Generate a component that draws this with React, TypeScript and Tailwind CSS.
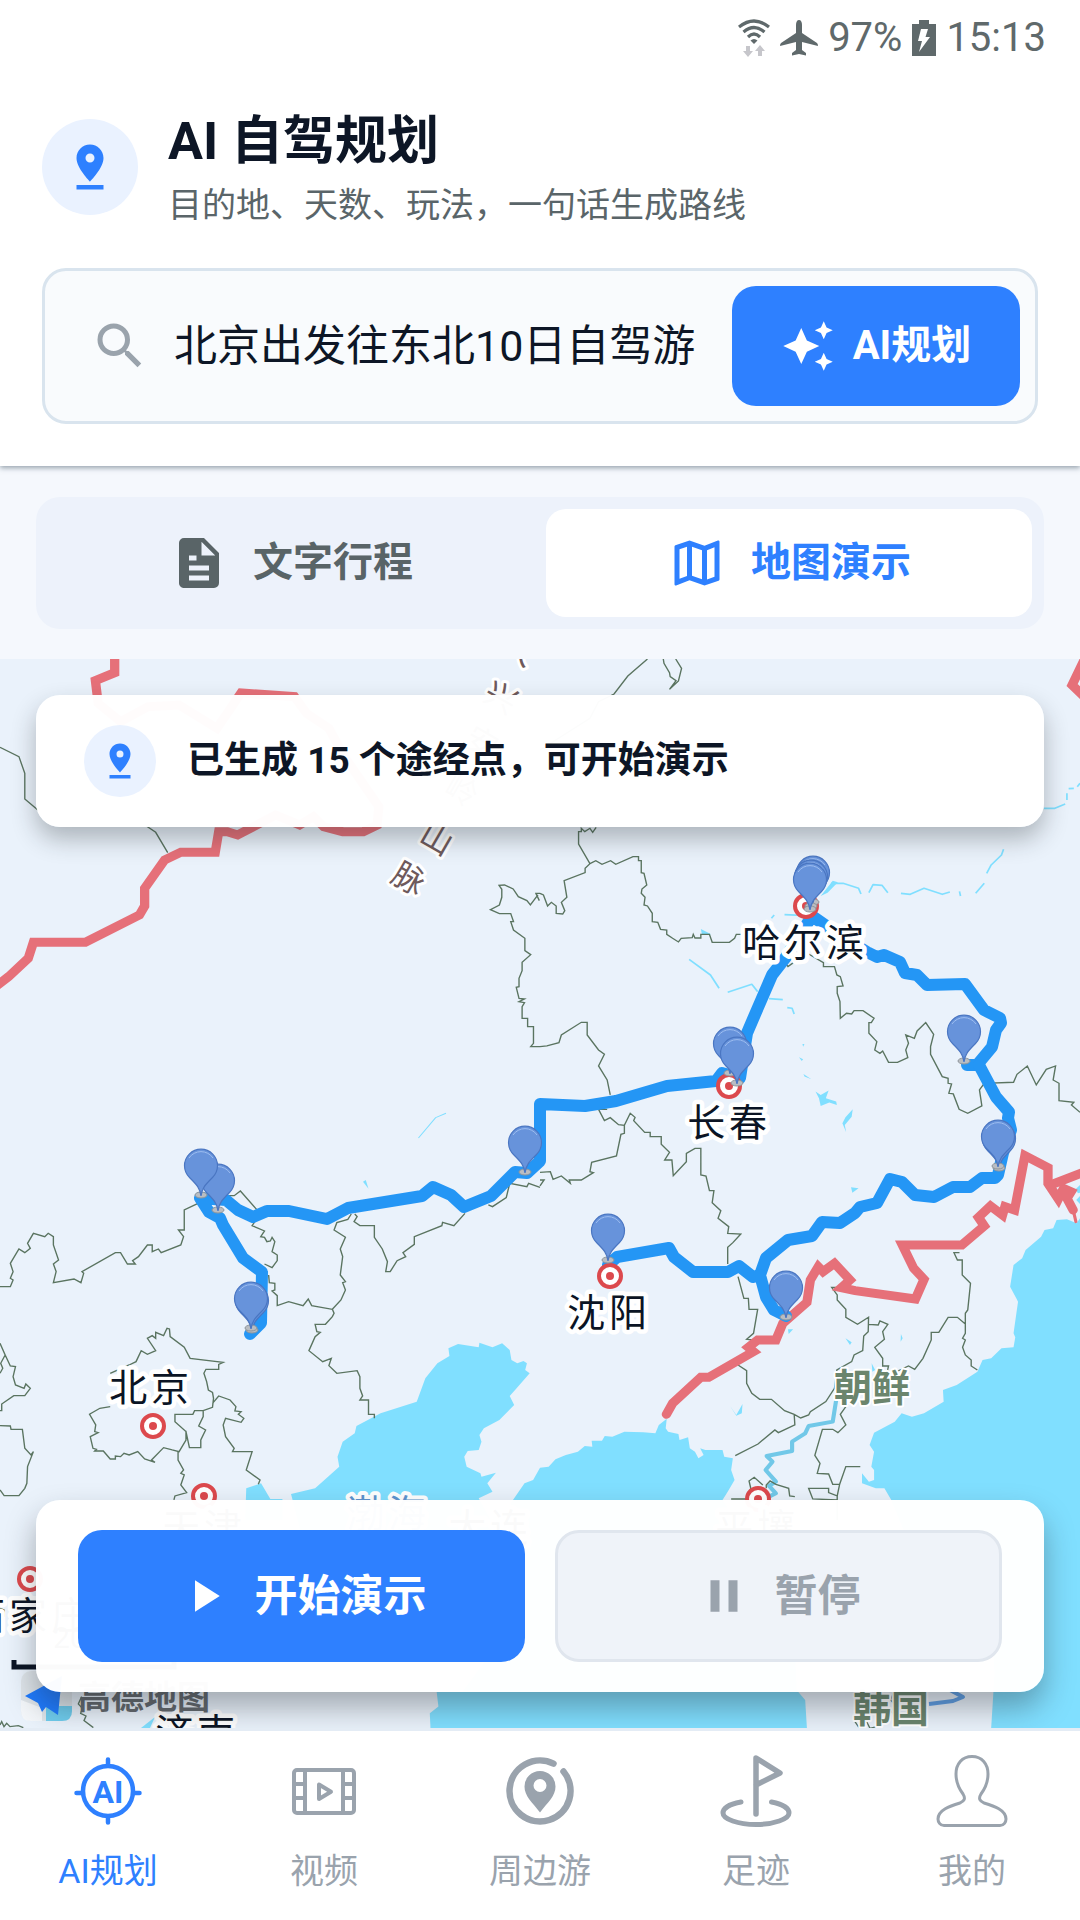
import type { ReactNode } from "react";
import { MdAutoAwesome, MdOutlineMap, MdPause, MdPlayArrow, MdSearch } from "react-icons/md";

const route = [
  "M250 1334L261 1323L262 1272L243 1258L223 1225L220 1218L209 1212L200 1198L226 1200L238 1210L253 1217L267 1211H289L327 1219L348 1208L422 1196L433 1187L451 1195L464 1207L491 1196L515 1172L527 1173L540 1161V1104L585 1106L616 1101L667 1086L716 1081L722 1073L740 1078L747 1033L772 975L786 957L812 916L835 932L867 952L877 957L884 955L900 962L905 973L917 975L927 985L965 984L984 1010L1000 1018L1001 1023L996 1030L992 1047L977 1065H967",
  "M979 1065L996 1097L1009 1112L1008 1118L1011 1130L1003 1153L998 1175L995 1178H982L970 1187H953L934 1197L915 1195L902 1182L890 1179L877 1203L860 1207L855 1213L840 1223L822 1222L812 1236L788 1240L766 1258L760 1275L766 1297L774 1310L786 1316",
  "M760 1275L753 1277L739 1266L728 1272H693L674 1257L669 1248L617 1257L608 1265",
];

const pins = [
  [218, 1181],
  [201, 1166],
  [252, 1301],
  [251, 1299],
  [525, 1143],
  [608, 1231],
  [786, 1288],
  [999, 1139],
  [998, 1137],
  [964, 1032],
  [730, 1044],
  [737, 1054],
  [813, 873],
  [811, 877],
  [810, 880],
];

const cityDots = [
  [806, 906],
  [729, 1086],
  [610, 1276],
  [153, 1426],
  [204, 1496],
  [758, 1499],
  [30, 1579],
];

const cityLabels = [
  { name: "哈尔滨", x: 805, y: 956 },
  { name: "长春", x: 729, y: 1136 },
  { name: "沈阳", x: 609, y: 1326 },
  { name: "北京", x: 151, y: 1401 },
  { name: "天津", x: 204, y: 1541 },
  { name: "平壤", x: 757, y: 1541 },
  { name: "石家庄", x: 30, y: 1629 },
  { name: "大连", x: 490, y: 1541 },
  { name: "济南", x: 197, y: 1746 },
];

const mountains = [
  { char: "大", x: 519, y: 649 },
  { char: "兴", x: 501, y: 697 },
  { char: "安", x: 482, y: 742 },
  { char: "岭", x: 462, y: 790 },
  { char: "山", x: 437, y: 838 },
  { char: "脉", x: 409, y: 878 },
];

const navItems = [
  { label: "AI规划", icon: <AiIcon />, active: true },
  { label: "视频", icon: <FilmIcon />, active: false },
  { label: "周边游", icon: <NearbyIcon />, active: false },
  { label: "足迹", icon: <FlagIcon />, active: false },
  { label: "我的", icon: <PersonIcon />, active: false },
];

function NavSvg({ children }: { children: ReactNode }) {
  return (
    <svg
      viewBox="0 0 72 72"
      className="size-[72px]"
      fill="none"
      stroke="currentColor"
      strokeLinecap="round"
      strokeLinejoin="round"
      aria-hidden="true"
    >
      {children}
    </svg>
  );
}

function AiIcon() {
  return (
    <NavSvg>
      <circle cx="36" cy="36" r="25" strokeWidth="4.5" />
      <path d="M36 4.500V10M36 62V67.500M4.500 38H10M62 38H67.500" strokeWidth="4.500" />
      <text
        x="36"
        y="48"
        textAnchor="middle"
        fill="currentColor"
        stroke="none"
        className="font-['Roboto',sans-serif] text-[32px] font-bold"
      >
        AI
      </text>
    </NavSvg>
  );
}

function FilmIcon() {
  return (
    <NavSvg>
      <rect x="6" y="15" width="60" height="43" rx="3" strokeWidth="4" />
      <path d="M17 15V58M55 15V58M6 29H17M6 43H17M55 29H66M55 43H66" strokeWidth="4" />
      <path d="M31 29.500V44L43 36.700Z" strokeWidth="4" />
    </NavSvg>
  );
}

function NearbyIcon() {
  return (
    <NavSvg>
      <path d="M49.500 8.600A30.500 30.500 0 1 0 59.500 16.500" strokeWidth="6.500" />
      <path
        d="M36 16A15.500 15.500 0 0 0 20.500 31.500C20.500 41 28 47 36 57.500C44 47 51.500 41 51.500 31.500A15.500 15.500 0 0 0 36 16ZM36 24A6.500 6.500 0 1 1 36 37A6.500 6.500 0 1 1 36 24Z"
        fill="currentColor"
        stroke="none"
        fillRule="evenodd"
      />
    </NavSvg>
  );
}

function FlagIcon() {
  return (
    <NavSvg>
      <path d="M36 59V3L60 18L36 30" strokeWidth="5.500" />
      <path d="M21 47C10 49 3 53 3 58C3 64 18 69.500 36 69.500S69 64 69 58C69 53 62 49 51.500 47" strokeWidth="5" />
    </NavSvg>
  );
}

function PersonIcon() {
  return (
    <NavSvg>
      <path
        d="M36 1.500C26 1.500 20 9 20 19C20 29 24 35 27 39C30 44 28 46 24 48C14 51 2 55 2 64C2 67 4 70.500 8 70.500H64C68 70.500 70 67 70 64C70 55 58 51 48 48C44 46 42 44 45 39C48 35 52 29 52 19C52 9 46 1.500 36 1.500Z"
        strokeWidth="3"
      />
    </NavSvg>
  );
}

function PinDropIcon({ className }: { className: string }) {
  return (
    <svg viewBox="0 0 24 24" className={className} fill="currentColor" aria-hidden="true">
      <path d="M18 8c0-3.310-2.690-6-6-6S6 4.690 6 8c0 4.500 6 10.500 6 10.500s6-6 6-10.500zm-8 0a2 2 0 1 1 4 0 2 2 0 0 1-4 0zM6 20v2h12v-2H6z" />
    </svg>
  );
}

function DocumentIcon() {
  return (
    <svg viewBox="0 0 24 24" className="size-[60px]" fill="currentColor" aria-hidden="true">
      <path
        fillRule="evenodd"
        d="M6 2a2 2 0 0 0-2 2v16c0 1.100.900 2 2 2h12a2 2 0 0 0 2-2V8l-6-6H6zm7 1.500L18.500 9H13V3.500zM8 9h3v2H8V9zm0 4h8v2H8v-2zm0 4h8v2H8v-2z"
      />
    </svg>
  );
}

function StatusBar() {
  return (
    <div className="-mr-2 flex h-16 items-center justify-end gap-[10px] pt-3 font-['Roboto',sans-serif] text-[40px] leading-none text-[#5f696b]">
      <svg viewBox="0 0 32 38" className="h-[38px] w-8" fill="none" aria-hidden="true">
        <g stroke="currentColor" strokeWidth="3.200">
          <path d="M1 8Q16 -4 31 8" />
          <path d="M5.500 13Q16 4 26.500 13" />
          <path d="M10 18Q16 12 22 18" />
        </g>
        <path d="M12.500 21.500Q16 18.500 19.500 21.500L16 25Z" fill="currentColor" />
        <path d="M8 27h4v5h3l-5 6-5-6h3zM20 37h4v-5h3l-5-6-5 6h3z" fill="#c6c6cb" />
      </svg>
      <svg viewBox="0 0 38 36" className="h-9 w-[38px]" fill="currentColor" aria-hidden="true">
        <path d="M19 0C21 0 22 2 22 5V13L37 23Q38 24 38 26L22 22V30L26 33V35.500L19 34L12 35.500V33L16 30V22L0 26Q0 24 1 23L16 13V5C16 2 17 0 19 0Z" />
      </svg>
      <span>97%</span>
      <svg viewBox="0 0 24 36" className="h-9 w-6" aria-hidden="true">
        <path d="M7 0H17V4H24V36H0V4H7Z" fill="currentColor" />
        <path d="M9 9H16L13.500 17H18L7 32L10 21H6Z" fill="#fff" />
      </svg>
      <span>15:13</span>
    </div>
  );
}

function Header() {
  return (
    <header className="relative z-10 bg-white px-[42px] pb-[42px] shadow-[0_2px_5px_rgba(60,80,95,0.5)]">
      <StatusBar />
      <div className="mt-11 flex items-start gap-[30px]">
        <div className="mt-[11px] grid size-24 shrink-0 place-items-center rounded-full bg-[#eaf2ff] text-[#2e80ff]">
          <PinDropIcon className="size-[54px]" />
        </div>
        <div>
          <h1 className="text-[52px] leading-[68px] font-bold text-[#0d1626]">AI 自驾规划</h1>
          <p className="mt-[2px] text-[34px] leading-[54px] text-[#5a6569]">
            目的地、天数、玩法，一句话生成路线
          </p>
        </div>
      </div>
      <form className="mt-9 flex items-center rounded-3xl border-3 border-[#d9e4ee] bg-[#f9fbfd] p-[15px] pl-[45px]">
        <label htmlFor="trip" className="shrink-0 text-[#9aa3ac]">
          <MdSearch className="size-[60px]" aria-hidden="true" />
          <span className="sr-only">行程需求</span>
        </label>
        <input
          id="trip"
          type="text"
          defaultValue="北京出发往东北10日自驾游"
          className="ml-6 h-[72px] min-w-0 flex-1 bg-transparent pb-2 text-[43px] text-[#0d1626] outline-none"
        />
        <button
          type="button"
          className="flex h-[120px] w-72 shrink-0 items-center justify-center gap-[18px] rounded-3xl bg-[#2e80ff] text-[40px] font-bold text-white"
        >
          <MdAutoAwesome className="size-[54px]" aria-hidden="true" />
          AI规划
        </button>
      </form>
    </header>
  );
}

function ViewTabs() {
  return (
    <div className="bg-[#f5f8fd] px-9 pt-[31px] pb-[30px]">
      <div role="tablist" className="flex gap-3 rounded-3xl bg-[#edf2fb] p-3">
        <button
          type="button"
          role="tab"
          aria-selected="false"
          className="flex h-[108px] flex-1 items-center justify-center gap-6 rounded-[20px] text-[40px] font-bold text-[#596467]"
        >
          <DocumentIcon />
          文字行程
        </button>
        <button
          type="button"
          role="tab"
          aria-selected="true"
          className="flex h-[108px] flex-1 items-center justify-center gap-6 rounded-[20px] bg-white text-[40px] font-bold text-[#2e80ff]"
        >
          <MdOutlineMap className="size-[60px]" aria-hidden="true" />
          地图演示
        </button>
      </div>
    </div>
  );
}

function Seas() {
  return (
    <g fill="#80dfff">
      <g transform="translate(0 1100) scale(.3444 .3333)">
        <path d="M845 1182L915 1165 985 1100 980 1070 995 1025 1030 1000 1035 978 1105 940 1210 905 1235 835 1270 790 1305 768 1302 745 1330 732 1390 742 1392 728 1430 742 1458 730 1480 750 1485 780 1502 790 1520 783 1530 790 1525 810 1538 820 1500 865 1480 888 1493 915 1450 960 1405 985 1392 1005 1398 1025 1390 1050 1358 1053 1348 1070 1355 1100 1395 1120 1398 1130 1440 1118 1415 1150 1430 1175 1390 1195 1440 1290 1300 1500 900 1400Z" />
        <path d="M712 1260L715 1165 758 1150 785 1197 820 1197V1260Z" />
        <path d="M1054 245L1062 240 1070 266Z" />
      </g>
      <g transform="translate(540 1100) scale(.3444 .3333)">
        <path d="M-85 1210L-45 1150 -20 1140 0 1103 25 1100 45 1078 75 1065 110 1055 130 1038 152 1040 150 1022 180 1022 188 1008 210 1010 245 995 300 997 335 1000 345 975 368 956 365 985 372 995 402 1002 405 1020 430 1012 435 1045 450 1055 460 1075 475 1065 465 1045 480 1050 530 1050 535 1070 560 1075 555 1110 565 1140 545 1175 530 1200 640 1380 580 1500 740 1650 745 1770 770 1800 775 1884 -318 1884 -320 1840 -295 1820 -300 1776 -225 1776 -100 1600 -100 1280Z" />
        <path d="M1568 355L1558 370 1530 358 1500 360 1490 385 1465 390 1455 410 1410 450 1400 475 1375 495 1365 560 1388 605 1375 700 1380 712 1375 742 1340 745 1310 775 1285 780 1270 815 1210 855 1170 870 1172 905 1115 940 1080 950 1050 940 1030 965 970 998 957 1035 970 1055 962 1100 970 1110 970 1140 955 1145 935 1120 935 1150 975 1165 1000 1165 1020 1200 1100 1400 1315 1600 1320 1720 1310 1884H1568Z" />
        <path d="M1568 255L1555 268 1562 280 1568 278ZM1568 288L1557 300 1568 312ZM887 715L905 727 900 735ZM963 790L973 810 965 815ZM1048 702L1053 715 1047 725ZM720 688H735L722 702ZM903 262L925 265 907 278ZM552 918L570 945 588 912 586 940 570 947ZM1088 1187V1200H1093ZM887 52L908 28 905 50 885 75 889 97 878 70Z" />
      </g>
      <g transform="translate(540 650) scale(.3444 .3333)">
        <path d="M815 738L850 692 865 697 835 728ZM800 1325L815 1335 838 1322 830 1345 860 1355 862 1365 840 1358 815 1368 810 1345ZM467 837L497 853 470 853ZM752 1222L764 1228 760 1233ZM762 1182H768L764 1190ZM765 1272L788 1288 768 1280Z" />
      </g>
      <path d="M141 1728L155 1717 150 1728Z" />
    </g>
  );
}

function Rivers() {
  return (
    <g fill="none" stroke="#80dfff" strokeWidth="5" strokeLinejoin="round">
      <g transform="translate(540 650) scale(.3444 .3333)">
        <path d="M845 700H880L925 715 932 732M955 728L967 704 993 706 1010 728M1048 730L1075 733 1115 715 1168 733 1190 726M1218 724L1221 738M1265 730L1290 700M1297 670L1310 645 1340 615 1346 598M1463 475H1495L1525 462M1530 450V430M1535 416L1550 415M1560 410L1568 400M433 928L495 975 520 1015M545 1027L615 1003 632 1025M665 1046L705 1049M718 1073L732 1075 738 1092M672 805L680 795M710 794L760 796" />
      </g>
      <g transform="translate(0 650) scale(.3444 .3333)">
        <path d="M1215 1464L1265 1403 1295 1390" strokeWidth="3" />
      </g>
      <g transform="translate(540 1100) scale(.3444 .3333)" stroke="#71c8e8" strokeWidth="12">
        <path d="M860 900L850 965 780 978 770 1000 732 1025V1053L658 1068 675 1085 655 1110 685 1145 665 1158 685 1180 665 1190" />
      </g>
      <path d="M929 1704L953 1701 963 1697 950 1690" stroke="#5f9fe6" strokeWidth="4" />
    </g>
  );
}

function Provinces() {
  return (
    <g fill="none" stroke="#5a7460" strokeWidth="4">
      <g transform="translate(0 650) scale(.3444 .3333)">
        <path d="M0 292L55 320 72 370V447L110 480M425 528L452 547 487 608M1568 730H1556L1566 752M1562 735L1540 765 1530 752 1505 740 1490 717 1465 705 1449 706 1457 718V742L1450 765 1424 779 1450 791H1483L1491 815H1483L1491 840 1524 865V902L1541 914 1516 937V962L1507 985V1010L1499 1012 1507 1045 1523 1047 1507 1055 1523 1058 1516 1070V1105H1532V1130H1549V1180L1541 1190H1568" />
      </g>
      <g transform="translate(540 650) scale(.3444 .3333)">
        <path d="M312 27L255 78 215 132 170 155 145 205 0 300M358 27L360 40 376 68 378 80 395 92 376 118 402 93 411 55 394 27M163 532L153 547 145 535 130 545 120 535V545H112V582L145 641 131 655V668L70 692 78 742 62 757 72 782 66 792 47 790V768L33 757 22 768 10 735 0 730M145 641L162 632 180 643 205 632 220 643 270 620H286V632H294V668L302 670 310 705 296 717 294 730 305 742 302 765 312 768 326 790V815L342 817 350 838 368 840V853L385 865 402 876 410 865 442 863 445 853 450 864H467V853H492L500 877H550L565 865 570 853H600" />
        <path d="M780 912L823 938V950H855L862 975 872 980 880 1008 863 1010V1030L871 1055 872 1105 890 1090 905 1092 912 1082H938L970 1105 962 1118H955V1150L978 1175 972 1200 987 1210 995 1203 1012 1237H1038L1068 1223 1062 1200 1070 1180 1062 1155 1087 1165 1095 1143 1120 1118 1143 1153 1134 1190V1213L1168 1280 1185 1285V1300L1195 1302 1187 1330 1200 1332 1217 1378 1242 1390 1283 1368 1276 1320 1290 1300 1375 1297 1385 1273 1415 1248 1441 1305 1470 1258 1497 1248 1490 1290 1507 1300V1352L1550 1357 1543 1365 1568 1387M0 1190L20 1188 55 1178 62 1155 120 1117H137V1155L170 1200 187 1213 170 1248 195 1290 204 1335M665 935L690 940 705 930 720 950 740 935" />
      </g>
      <g transform="translate(540 1100) scale(.3444 .3333)">
        <path d="M195 28H170L187 62 204 53 228 74 245 76V100L235 103 222 168 150 187 145 215 155 218 120 240H85L88 250 62 228 38 238 30 215 0 217M0 240H12L0 258M245 76L262 40 276 52 272 62 304 97H320V110H352V133L376 157 362 180H383L387 227 425 185V160L450 145H467V225L482 228 492 272H505L500 308 525 332 517 355 548 380 545 400 583 402 560 428 545 442V492M575 530L592 595H605L607 628H632L620 700 600 718 620 720M575 795L600 812V850L615 880 638 898H672L710 932 738 943 757 954 780 945 785 935 830 905 855 865 862 810 905 785 912 765 937 752 940 708 953 695 954 652 922 673 888 652V628L863 600V585L847 562H868M738 943L740 975 692 998 682 990 633 1032 567 1067M954 673L982 675 987 663 1010 673 995 695 1000 718 972 742 995 775V798H1012L1005 830 1045 810 1070 798 1088 808 1112 775 1136 720V697H1158L1185 652H1212L1235 672M1218 458H1202L1212 480H1226V525L1250 550 1242 630 1235 640V700L1227 715 1235 720 1227 742 1235 765 1252 780V798L1270 810M870 865L895 910 872 943 888 975 865 998 850 988H820L798 1066 813 1090 805 1120 838 1122 850 1153H870L888 1100H930M863 1260V1188L838 1178V1165H780L792 1197 863 1200M870 1153L863 1188M555 1197H600L612 1165 607 1143 622 1132 647 1155M657 1165V1155L668 1143 685 1153 722 1165 725 1188 740 1190" />
      </g>
      <g transform="translate(0 1100) scale(.3444 .3333)">
        <path d="M0 560H30L38 540 30 535 38 515 30 490 55 447 72 458 88 445 80 430 97 400 130 410 140 400 155 410V435L170 480 155 492 163 515 155 548 215 537 235 548 243 520 238 515 335 458H350L370 492H393L385 482 402 470 428 435H442V455L460 447 468 458 525 435 533 410 518 390H535V330L575 310M655 287H680L698 273 745 328M740 365L732 377 768 393 757 410 768 412 775 425 785 423 790 412 798 425 790 455 805 465V482L790 503 768 492M780 525L782 548 798 550V570L790 573 805 587V617L838 605 880 617 895 597 905 617 965 628 990 600 1003 570 995 548 1003 545 988 525 995 470 988 447 1003 412 970 390 978 368 1010 358 1020 342M1030 342L1037 350 1028 365 1045 377H1087V412L1110 447 1125 485 1120 515H1133L1153 482 1178 470 1170 458 1203 433V410L1283 377 1285 367 1318 377 1350 340M1418 315L1430 320 1470 293 1480 250 1530 260 1535 250 1568 262" />
        <path d="M965 628L970 640 965 650 945 673H915L920 695 930 697 915 710 897 752 937 785 962 775 955 797 978 820 1037 812 1045 830V865L1053 888 1045 900 1070 900V943H1087V955M320 820L375 795 395 785 410 752 428 763 452 752 428 715 442 707 452 715V697L475 707 485 685 492 687 494 710 535 742 552 775 648 787 635 793V808H598L592 820 600 845 605 870 617 877 620 895 617 922 590 932H565L560 943H508V965L540 995 550 1043H583V1020L597 990 577 978 590 950V932M320 920L290 925 260 943 278 975 275 995 285 998 262 1010 270 1045 280 1048 275 1053H300L320 1077H335V1068L350 1070 360 1060 375 1065 400 1055 420 1077 450 1087 440 1080 475 1043 500 1050 520 1055 540 1020V992M517 1055V1080L533 1110 525 1120 535 1125 525 1155 542 1178 508 1188 505 1200M617 910L635 888 668 900 685 920 682 933 700 935 692 943 708 955 700 967 655 955 648 975 655 1010 680 1045 675 1055H732L715 1110 755 1140 750 1153M0 730L15 765 2 790 8 805 0 820M15 765L30 798 45 800 38 830 45 855 70 865 75 852 88 865 72 887H40L5 912V932H0M0 977L30 978 32 988H65L72 1045 90 1065 97 1055 80 1100 78 1150 72 1165 55 1187H12L0 1170" />
      </g>
      <g transform="translate(0 1480) scale(.3333)">
        <path d="M0 735L5 725 12 740 20 730 30 740 55 737 70 743M245 650L235 672 247 685 242 700 258 708 252 722 280 743M0 385L12 390V410" />
      </g>
      <g transform="translate(640 1650) scale(.3333)">
        <path d="M645 215L655 230 680 215 690 235 710 230M765 235V225H798M760 130L752 150 765 165 755 185 765 200" />
      </g>
    </g>
  );
}

function NationalBorder() {
  return (
    <g fill="none" stroke="#e67079" strokeWidth="27" strokeLinejoin="miter">
      <g transform="translate(0 650) scale(.3444 .3333)">
        <path d="M333 10V68L277 92 285 160 350 215 430 170 520 165 630 235 700 129 855 140 890 190 955 235 1000 320 1100 470 1095 525 1055 545H995L940 530 910 500 870 525 800 495 690 555 660 545H635L625 607H525L478 630 420 715V768L405 795 248 877H97L82 925 25 980 -10 1008" />
      </g>
      <g transform="translate(540 650) scale(.3444 .3333)">
        <path d="M1580 30L1545 105 1580 140" />
      </g>
      <g transform="translate(540 1100) scale(.3444 .3333)" strokeLinecap="round">
        <path d="M367 943L385 910 467 832H490L620 755 605 742 632 720H685L705 670 775 607 785 540 808 500 822 515 855 490 900 540 875 563 915 572 1090 597 1115 538 1085 505 1052 435H1225L1290 378 1273 352 1308 318 1343 345 1350 320 1378 330 1408 167 1475 203V250L1505 297 1520 265 1542 275 1530 295 1548 330" />
        <path d="M1490 252L1590 212" />
        <path d="M1546 320L1556 365" strokeWidth="9" />
      </g>
    </g>
  );
}

function RouteMap() {
  return (
    <svg
      viewBox="0 658 1080 1070"
      preserveAspectRatio="xMidYMax slice"
      className="absolute inset-0 size-full"
      role="img"
      aria-label="路线地图"
    >
      <rect y="600" width="1080" height="1200" fill="#eaf2fb" />
      <Seas />
      <Rivers />
      <Provinces />
      <NationalBorder />
      <g fill="none" stroke="#2496f5" strokeWidth="12" strokeLinejoin="round" strokeLinecap="round">
        {route.map((d) => (
          <path key={d} d={d} />
        ))}
      </g>

      {cityDots.map(([x, y]) => (
        <g key={`${x}-${y}`}>
          <circle cx={x} cy={y} r="11" fill="#fff" stroke="#dc494d" strokeWidth="4" />
          <circle cx={x} cy={y} r="4" fill="#dc494d" />
        </g>
      ))}

      <g textAnchor="middle" stroke="#fff" strokeLinejoin="round" className="[paint-order:stroke]">
        <g fill="#0b1424" strokeWidth="9" className="text-[38px] tracking-widest">
          {cityLabels.map((city) => (
            <text key={city.name} x={city.x} y={city.y}>
              {city.name}
            </text>
          ))}
        </g>
        <g fill="#6b856d" strokeWidth="4" className="text-[38px] font-bold">
          <text x="872" y="1401">朝鲜</text>
          <text x="891" y="1722">韩国</text>
        </g>
        <text x="388" y="1527" fill="#5d94cf" strokeWidth="8" className="text-[38px] tracking-widest">
          渤海
        </text>
        <g fill="#6e5a5c" strokeWidth="6" className="text-[32px]">
          {mountains.map((m) => (
            <text key={m.char} x={m.x} y={m.y + 12} transform={`rotate(30 ${m.x} ${m.y})`}>
              {m.char}
            </text>
          ))}
        </g>
      </g>

      {pins.map(([x, y]) => (
        <g key={`${x}-${y}`} transform={`translate(${x} ${y})`}>
          <ellipse cy="29" rx="6" ry="3" fill="#b9bdc2" stroke="#8f969c" />
          <path
            d="M0 30C-1 22 -4 19 -11.500 11.500A16.500 16.500 0 1 1 11.500 11.500C4 19 1 22 0 30Z"
            fill="#6793db"
            stroke="#4a76c2"
            strokeWidth="1.200"
          />
          <path d="M-12 -8A14.500 14.500 0 0 1 12 -8" fill="none" stroke="#9dbdf0" strokeWidth="1" />
        </g>
      ))}

      {/* scale bar and provider mark */}
      <text x="53" y="1648" fill="#0b1424" className="text-[30px]">200公里</text>
      <path d="M14 1660V1667H174V1660" fill="none" stroke="#0b1424" strokeWidth="5" />
      <rect x="21" y="1671" width="51" height="50" rx="10" fill="#dfe5ea" />
      <path d="M46 1706H72V1711Q72 1721 62 1721H46Z" fill="#6fcdee" />
      <path d="M21 1700L42 1708V1721H31Q21 1721 21 1711Z" fill="#f4f7fa" />
      <path d="M25 1696L62 1676L58 1715L46 1707L42 1712L38 1703Z" fill="#1f7bff" />
      <text x="78" y="1709" fill="#63686d" className="text-[33px] font-bold">高德地图</text>
    </svg>
  );
}

function MapSection() {
  return (
    <main className="relative flex flex-1 flex-col justify-between overflow-hidden p-9">
      <RouteMap />
      <div className="relative flex h-[132px] items-center gap-[31px] rounded-3xl bg-white/98 px-12 shadow-[0_12px_24px_rgba(30,35,40,0.3)]">
        <div className="grid size-[72px] place-items-center rounded-full bg-[#eaf2ff] text-[#2e80ff]">
          <PinDropIcon className="size-[42px]" />
        </div>
        <p className="text-[37px] font-bold text-[#0d1626]">已生成 15 个途经点，可开始演示</p>
      </div>
      <div className="relative grid grid-cols-2 gap-[30px] rounded-3xl bg-white/98 px-[42px] py-[30px] shadow-[0_16px_30px_rgba(30,35,40,0.35)]">
        <button
          type="button"
          className="flex h-[132px] items-center justify-center gap-6 rounded-3xl bg-[#2e80ff] text-[43px] font-bold text-white"
        >
          <MdPlayArrow className="size-[54px]" aria-hidden="true" />
          开始演示
        </button>
        <button
          type="button"
          disabled
          className="flex h-[132px] items-center justify-center gap-6 rounded-3xl border-3 border-[#e0e6ee] bg-[#eff3f9] text-[43px] font-bold text-[#9aa3ad]"
        >
          <MdPause className="size-[54px]" aria-hidden="true" />
          暂停
        </button>
      </div>
    </main>
  );
}

function BottomNav() {
  return (
    <nav className="grid grid-cols-5 border-t-3 border-[#e4ecf5] bg-white pt-6 pb-[25px]">
      {navItems.map((item) => (
        <a
          key={item.label}
          href="#"
          aria-current={item.active ? "page" : undefined}
          className={
            item.active
              ? "flex flex-col items-center gap-5 text-[34px] leading-[48px] text-[#2e80ff]"
              : "flex flex-col items-center gap-5 text-[34px] leading-[48px] text-[#9aa3ad]"
          }
        >
          {item.icon}
          {item.label}
        </a>
      ))}
    </nav>
  );
}

export default function App() {
  return (
    <div className="flex min-h-screen flex-col bg-white font-['Roboto','Noto_Sans_CJK_SC',sans-serif]">
      <Header />
      <ViewTabs />
      <MapSection />
      <BottomNav />
    </div>
  );
}
